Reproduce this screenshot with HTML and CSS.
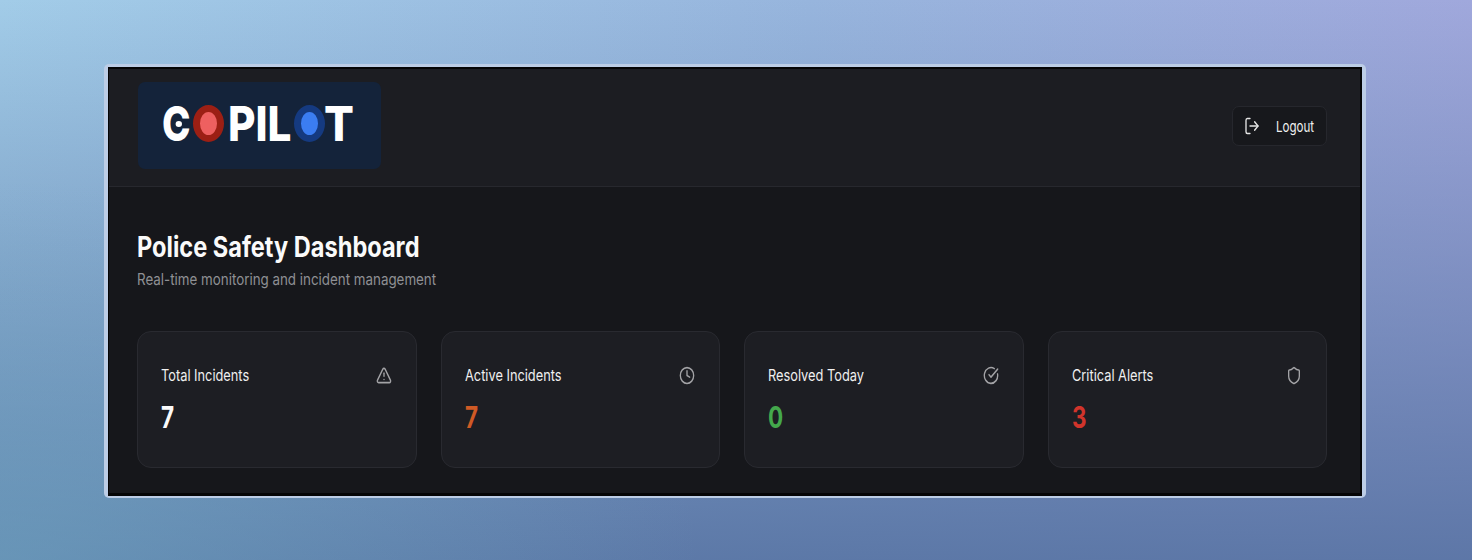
FILE: index.html
```html
<!DOCTYPE html>
<html lang="en">
<head>
    <meta charset="UTF-8">
    <title>Police Safety Dashboard</title>
    <link rel="stylesheet" href="styles.css">
</head>
<body>

<div class="window">
    <div class="app">
        <!-- header -->
        <header class="top-bar">
            <div class="logo">
                <span class="logo-c">C<i class="logo-c-dot"></i></span>
                <span class="logo-o logo-o-red">O</span>
                <span class="logo-pil">PIL</span>
                <span class="logo-o logo-o-blue">O</span>
                <span class="logo-t">T</span>
            </div>
            <a href="#" class="btn-logout">
                <svg class="logout-icon" viewBox="0 0 24 24" preserveAspectRatio="none" fill="none" stroke="currentColor" stroke-width="2" stroke-linecap="round" stroke-linejoin="round">
                    <path d="M9 21H5a2 2 0 0 1-2-2V5a2 2 0 0 1 2-2h4"/>
                    <path d="M16 17l5-5-5-5"/>
                    <path d="M21 12H9"/>
                </svg>
                <span class="logout-text">Logout</span>
            </a>
        </header>

        <!-- main -->
        <main class="content">
            <h1 class="page-title">Police Safety Dashboard</h1>
            <p class="page-sub">Real-time monitoring and incident management</p>

            <div class="stats">
                <div class="card">
                    <div class="card-head">
                        <span class="card-label">Total Incidents</span>
                        <svg class="card-icon" viewBox="0 0 24 24" preserveAspectRatio="none" fill="none" stroke="currentColor" stroke-width="2" stroke-linecap="round" stroke-linejoin="round">
                            <path d="M21.700 18l-8-14a2 2 0 0 0-3.500 0l-8 14A2 2 0 0 0 4 21h16a2 2 0 0 0 1.700-3"/>
                            <path d="M12 9v4"/>
                            <path d="M12 17h.01"/>
                        </svg>
                    </div>
                    <div class="card-value">7</div>
                </div>
                <div class="card">
                    <div class="card-head">
                        <span class="card-label">Active Incidents</span>
                        <svg class="card-icon" viewBox="0 0 24 24" preserveAspectRatio="none" fill="none" stroke="currentColor" stroke-width="2" stroke-linecap="round" stroke-linejoin="round">
                            <circle cx="12" cy="12" r="10"/>
                            <path d="M12 6v6l4 2"/>
                        </svg>
                    </div>
                    <div class="card-value value-orange">7</div>
                </div>
                <div class="card">
                    <div class="card-head">
                        <span class="card-label">Resolved Today</span>
                        <svg class="card-icon" viewBox="0 0 24 24" preserveAspectRatio="none" fill="none" stroke="currentColor" stroke-width="2" stroke-linecap="round" stroke-linejoin="round">
                            <path d="M21.800 10A10 10 0 1 1 17 3.300"/>
                            <path d="M9 11l3 3L22 4"/>
                        </svg>
                    </div>
                    <div class="card-value value-green">0</div>
                </div>
                <div class="card">
                    <div class="card-head">
                        <span class="card-label">Critical Alerts</span>
                        <svg class="card-icon" viewBox="0 0 24 24" preserveAspectRatio="none" fill="none" stroke="currentColor" stroke-width="2" stroke-linecap="round" stroke-linejoin="round">
                            <path d="M20 13c0 5-3.500 7.500-7.700 9a1 1 0 0 1-.7 0C7.500 20.500 4 18 4 13V6a1 1 0 0 1 1-1c2 0 4.500-1.200 6.200-2.700a1.200 1.200 0 0 1 1.600 0C14.500 3.800 17 5 19 5a1 1 0 0 1 1 1z"/>
                        </svg>
                    </div>
                    <div class="card-value value-red">3</div>
                </div>
            </div>
        </main>
    </div>
</div>

</body>
</html>
```

FILE: styles.css
```css
/* page */
body {
    margin: 0;
    height: 560px;
    box-sizing: border-box;
    padding: 64px 106px 62px 104px;
    overflow: hidden;
    font-family: Inter, "Liberation Sans", sans-serif;
    background:
        radial-gradient(ellipse 700px 380px at 0% 100%, rgba(112, 170, 195, 0.55), rgba(112, 170, 195, 0)),
        linear-gradient(to bottom, rgba(84, 112, 160, 0), rgba(84, 112, 160, 0.88)),
        linear-gradient(to right, #a2cce8 0%, #97b5dd 55%, #a0a8dc 100%);
}

/* frame around the screenshot */
.window {
    height: 100%;
    box-sizing: border-box;
    padding: 3px 4px 2px 4px;
    background: #bccde6;
    border-radius: 5px;
}
.app {
    height: 100%;
    box-sizing: border-box;
    padding: 2px 2px 3px 1px;
    background: #050506;
    overflow: hidden;
    display: flex;
    flex-direction: column;
}

/* header */
.top-bar {
    height: 118px;
    flex-shrink: 0;
    box-sizing: border-box;
    display: flex;
    justify-content: space-between;
    align-items: center;
    padding: 0 33px 0 29px;
    background: #1c1d22;
    border-bottom: 1px solid #27282e;
}
.logo {
    width: 243px;
    height: 87px;
    margin-top: -5px;
    box-sizing: border-box;
    display: flex;
    align-items: center;
    padding-left: 24px;
    background: #14233a;
    border-radius: 7px;
    color: #fff;
    font-size: 48px;
    font-weight: 800;
    line-height: 1;
}
.logo-c {
    position: relative;
    width: 31px;
    margin-top: -3px;
    transform: scaleX(0.8);
    transform-origin: left center;
}
.logo-c-dot {
    position: absolute;
    left: 17px;
    top: 21px;
    width: 8px;
    height: 6px;
    border-radius: 50%;
    background: #fff;
}
.logo-o {
    width: 31px;
    height: 37px;
    margin-top: -3px;
    box-sizing: border-box;
    border-radius: 50%;
    border: 7px solid;
    color: transparent;
    font-size: 1px;
}
.logo-o-red {
    background: #ee6060;
    border-color: #9c1f14;
}
.logo-o-blue {
    background: #3b7df2;
    border-color: #153a80;
}
.logo-pil {
    width: 66px;
    margin: -3px 0 0 4px;
    transform: scaleX(0.88);
    transform-origin: left center;
}
.logo-t {
    width: 27px;
    margin: -3px 0 0 -1px;
    transform: scaleX(0.92);
    transform-origin: left center;
}
.btn-logout {
    width: 95px;
    height: 40px;
    box-sizing: border-box;
    display: flex;
    align-items: center;
    gap: 16px;
    padding-left: 11px;
    margin-bottom: 3px;
    background: #17181c;
    border: 1px solid #26272d;
    border-radius: 7px;
    color: #f0f0f0;
    font-size: 15px;
    text-decoration: none;
}
.logout-text {
    transform: scaleX(0.77);
    transform-origin: left center;
}
.logout-icon {
    width: 16px;
    height: 20px;
    color: #e6e6e6;
}

/* main area */
.content {
    flex: 1;
    padding: 43px 33px 0 28px;
    background: #16171b;
}
.page-title {
    margin: 0;
    color: #fafafa;
    font-size: 28px;
    font-weight: 700;
    line-height: 34px;
    transform: scaleX(0.842);
    transform-origin: left center;
}
.page-sub {
    margin: 5px 0 0;
    color: #8f9094;
    font-size: 16px;
    line-height: 20px;
    transform: scaleX(0.835);
    transform-origin: left center;
}

/* stat cards */
.stats {
    display: grid;
    grid-template-columns: repeat(4, 1fr);
    gap: 24px;
    margin-top: 42px;
}
.card {
    height: 137px;
    box-sizing: border-box;
    padding: 32px 24px 0 23px;
    background: #1d1e23;
    border: 1px solid #292a30;
    border-radius: 14px;
}
.card-head {
    display: flex;
    justify-content: space-between;
    align-items: center;
    height: 22px;
}
.card-label {
    color: #f0f0f0;
    font-size: 16px;
    line-height: 20px;
    transform: scaleX(0.8);
    transform-origin: left center;
}
.card-icon {
    width: 16px;
    height: 19px;
    color: #a3a3a6;
}
.card-value {
    margin-top: 13px;
    color: #fafafa;
    font-size: 30px;
    font-weight: 700;
    line-height: 36px;
    transform: scaleX(0.75);
    transform-origin: left center;
}
.value-orange {
    color: #cf5a25;
}
.value-green {
    color: #44a84c;
}
.value-red {
    color: #d1342b;
}
```
